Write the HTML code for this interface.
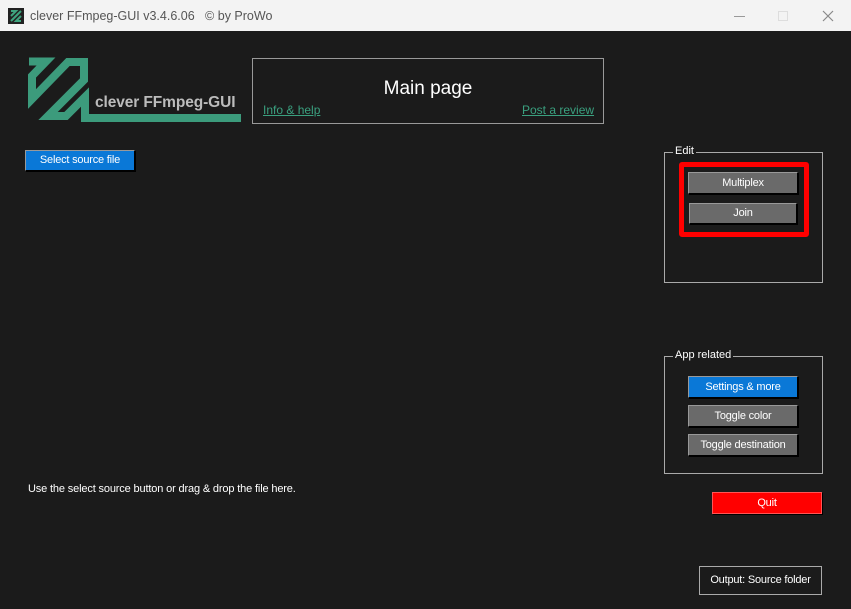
<!DOCTYPE html>
<html><head><meta charset="utf-8"><style>
*{margin:0;padding:0;box-sizing:border-box}
body{width:851px;height:609px;background:#1b1b1b;font-family:"Liberation Sans",sans-serif;position:relative;overflow:hidden}
.tb{position:absolute;left:0;top:0;width:851px;height:31px;background:#f3f3f3;color:#555;font-size:12.5px}
.abs{position:absolute}
.btn{position:absolute;color:#fff;font-size:11px;letter-spacing:-0.2px;text-align:center;border:1px solid #999;border-right-color:#000;border-bottom-color:#000;box-shadow:1px 1px 0 #000}
.gray{background:#6a6a6a}
.blue{background:#0a78d7}
.grp{position:absolute;border:1px solid #aaa}
.grp span{position:absolute;top:-8px;left:8px;background:#1b1b1b;color:#fff;font-size:11px;padding:0 2px}
</style></head><body>
<div class="tb">
 <svg class="abs" style="left:8px;top:8px" width="16" height="16"><rect width="16" height="16" fill="#222"/><path d="M3 3h5l-5 5M13 3l-10 10M13 8l-5 5h5" stroke="#3ea57f" stroke-width="2" fill="none"/></svg>
 <div class="abs" style="left:30px;top:9px">clever FFmpeg-GUI v3.4.6.06 &nbsp; © by ProWo</div>
 <div class="abs" style="left:734px;top:16px;width:11px;height:1px;background:#999"></div>
 <div class="abs" style="left:778px;top:11px;width:10px;height:10px;border:1px solid #ddd"></div>
 <svg class="abs" style="left:822px;top:10px" width="12" height="12"><path d="M1 1L11 11M11 1L1 11" stroke="#888" stroke-width="1.2"/></svg>
</div>
<svg class="abs" style="left:0;top:0" width="250" height="130">
 <path d="M29,61.5 H46 L32,76 V99 L68,62 H84 V80 L48,116 H66 L85,97 V118 H241" stroke="#3c9b7c" stroke-width="8" fill="none" stroke-linejoin="miter" stroke-linecap="butt"/>
</svg>
<div class="abs" style="left:95px;top:94px;color:#bcbcbc;font-size:15.5px;font-weight:bold;letter-spacing:-0.1px">clever FFmpeg-GUI</div>
<div class="abs" style="left:252px;top:58px;width:352px;height:66px;border:1px solid #999"></div>
<div class="abs" style="left:252px;top:78px;width:352px;text-align:center;color:#fff;font-size:19px">Main page</div>
<div class="abs" style="left:263px;top:103px;color:#3aa07f;font-size:12px;text-decoration:underline">Info &amp; help</div>
<div class="abs" style="left:522px;top:103px;color:#3aa07f;font-size:12px;text-decoration:underline">Post a review</div>
<div class="btn blue" style="left:25px;top:150px;width:110px;height:21px;line-height:19px">Select source file</div>
<div class="abs" style="left:28px;top:483px;color:#fff;font-size:11px;letter-spacing:-0.15px">Use the select source button or drag &amp; drop the file here.</div>
<div class="grp" style="left:664px;top:152px;width:159px;height:131px"><span>Edit</span></div>
<div class="abs" style="left:679px;top:162px;width:130px;height:75px;border:5px solid #f00;border-radius:3px"></div>
<div class="btn gray" style="left:688px;top:172px;width:110px;height:22px;line-height:20px">Multiplex</div>
<div class="btn gray" style="left:689px;top:203px;width:108px;height:21px;line-height:19px">Join</div>
<div class="grp" style="left:664px;top:356px;width:159px;height:118px"><span>App related</span></div>
<div class="btn blue" style="left:688px;top:376px;width:110px;height:22px;line-height:20px">Settings &amp; more</div>
<div class="btn gray" style="left:688px;top:405px;width:110px;height:22px;line-height:20px">Toggle color</div>
<div class="btn gray" style="left:688px;top:434px;width:110px;height:22px;line-height:20px">Toggle destination</div>
<div class="btn" style="left:712px;top:492px;width:110px;height:22px;line-height:20px;background:#f00;border-color:#f55">Quit</div>
<div class="abs" style="left:699px;top:566px;width:123px;height:29px;border:1px solid #aaa;color:#fff;font-size:11px;letter-spacing:-0.2px;text-align:center;line-height:27px">Output: Source folder</div>
</body></html>
